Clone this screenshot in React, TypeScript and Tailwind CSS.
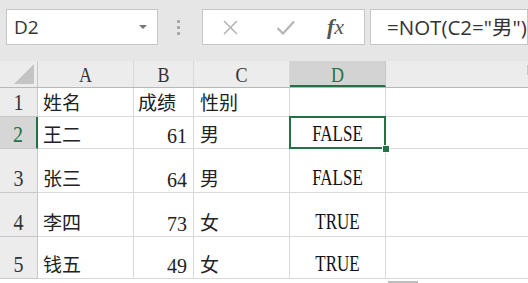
import React from "react";

const serif = "font-['Liberation_Serif','Noto_Sans_CJK_SC',serif]";
const cols = "grid grid-cols-[38px_96px_60px_96px_96px_1fr]";

type Row = { n: number; name: string; score: string; sex: string; d: string; h: string };

const rows: Row[] = [
  { n: 1, name: "姓名", score: "成绩", sex: "性别", d: "", h: "h-[29px]" },
  { n: 2, name: "王二", score: "61", sex: "男", d: "FALSE", h: "h-[32px]" },
  { n: 3, name: "张三", score: "64", sex: "男", d: "FALSE", h: "h-[44px]" },
  { n: 4, name: "李四", score: "73", sex: "女", d: "TRUE", h: "h-[44px]" },
  { n: 5, name: "钱五", score: "49", sex: "女", d: "TRUE", h: "h-[42px]" },
];

function Toolbar() {
  return (
    <div className="flex h-[61px] items-start bg-[#e6e6e6] pl-[6px] pt-[9px]">
      {/* Name box */}
      <div className="flex h-[36px] w-[152px] items-center justify-between border border-[#c6c6c6] bg-white pl-[7px] pr-[10px]">
        <span className="font-['Open_Sans',sans-serif] text-[19px] text-[#333]">D2</span>
        <span className="h-0 w-0 border-x-[4px] border-t-[4px] border-x-transparent border-t-[#777]" />
      </div>
      <div className="ml-[19px] flex h-[36px] flex-col items-center justify-center gap-[3px]">
        <span className="h-[3px] w-[3px] bg-[#aaa]" />
        <span className="h-[3px] w-[3px] bg-[#aaa]" />
        <span className="h-[3px] w-[3px] bg-[#aaa]" />
      </div>
      {/* Cancel / enter / function */}
      <div className="ml-[22px] flex h-[36px] w-[163px] items-center border border-[#c6c6c6] bg-white">
        <svg className="ml-[19px]" width="17" height="15" viewBox="0 0 17 15">
          <path d="M2 1 L15 14 M15 1 L2 14" stroke="#b5b5b5" strokeWidth="1.6" fill="none" />
        </svg>
        <svg className="ml-[37px]" width="19" height="15" viewBox="0 0 19 15">
          <path d="M1.5 8 L7 13.5 L18 1.5" stroke="#b5b5b5" strokeWidth="2.2" fill="none" />
        </svg>
        <span className="ml-[32px] font-['Liberation_Serif',serif] text-[22px] italic leading-none text-[#555]">
          <span className="font-bold">f</span>x
        </span>
      </div>
      <div className="ml-[5px] flex h-[36px] flex-1 items-center overflow-hidden whitespace-nowrap border border-[#c6c6c6] bg-white pl-[16px]">
        <span className="font-['Open_Sans','Noto_Sans_CJK_SC',sans-serif] text-[20.5px] text-[#333]">
          =NOT(C2="男")
        </span>
      </div>
    </div>
  );
}

function HeaderRow() {
  const letters = ["A", "B", "C", "D"];
  return (
    <div className={`${cols} h-[27px] border-b border-[#b8b8b8] bg-[#ececec]`}>
      <div className="relative border-r border-[#c8c8c8]">
        <span className="absolute bottom-[3px] right-[3px] h-0 w-0 border-b-[20px] border-l-[20px] border-b-[#c4c4c4] border-l-transparent" />
      </div>
      {letters.map((l) =>
        l === "D" ? (
          <div
            key={l}
            className={`flex items-end justify-center border-b-2 border-r border-b-[#217346] border-r-[#c8c8c8] bg-[#d3d3d3] pb-[1px] text-[18px] leading-none text-[#217346] ${serif}`}
          >
            <span className="inline-block scale-y-[1.15]">{l}</span>
          </div>
        ) : (
          <div
            key={l}
            className={`flex items-end justify-center border-r border-[#d8d8d8] pb-[3px] text-[18px] leading-none text-[#333] ${serif}`}
          >
            <span className="inline-block scale-y-[1.15]">{l}</span>
          </div>
        )
      )}
      <div className="relative">
        <span className="absolute right-0 top-[4px] h-[10px] w-px bg-[#c8c8c8]" />
      </div>
    </div>
  );
}

function DataRow({ r }: { r: Row }) {
  const active = r.n === 2;
  const cell = "flex items-end border-b border-r border-[#d9d9d9] pb-[3px] leading-none";
  return (
    <div className={`${cols} ${r.h}`}>
      <div
        className={`flex items-end justify-center pb-[4px] text-[20px] leading-none ${serif} ${
          active
            ? "border-b border-r-2 border-b-[#c8c8c8] border-r-[#217346] bg-[#d6d6d6] text-[#217346]"
            : "border-b border-r border-[#c8c8c8] bg-[#ececec] text-[#333]"
        }`}
      >
        <span className="inline-block scale-y-[1.15]">{r.n}</span>
      </div>
      <div className={`${cell} pl-[5px] text-[19px] text-[#222] ${serif}`}>{r.name}</div>
      <div
        className={`${cell} pr-[6px] text-[19px] text-[#222] ${serif} ${
          r.n === 1 ? "justify-start pl-[4px]" : "justify-end text-[20px]"
        }`}
      >
        <span className={r.n === 1 ? "" : "inline-block scale-y-[1.1]"}>{r.score}</span>
      </div>
      <div className={`${cell} pl-[6px] text-[19px] text-[#222] ${serif}`}>{r.sex}</div>
      <div className={`${cell} relative justify-center text-[17px] text-[#111] ${serif}`}>
        <span className="inline-block origin-bottom scale-y-[1.3]">{r.d}</span>
        {active && (
          <>
            <span className="absolute -left-px -top-px bottom-[-1px] right-[-1px] z-10 border-2 border-[#217346]" />
            <span className="absolute bottom-[-5px] right-[-5px] z-20 h-[8px] w-[8px] border border-white bg-[#217346]" />
          </>
        )}
      </div>
      <div className="border-b border-[#d9d9d9]" />
    </div>
  );
}

export default function App() {
  return (
    <div className="h-[283px] w-[528px] overflow-hidden bg-white">
      <Toolbar />
      <HeaderRow />
      {rows.map((r) => (
        <DataRow key={r.n} r={r} />
      ))}
      <div className="ml-[388px] mt-[2px] h-[2px] w-[30px] bg-[#bdbdbd]" />
    </div>
  );
}
